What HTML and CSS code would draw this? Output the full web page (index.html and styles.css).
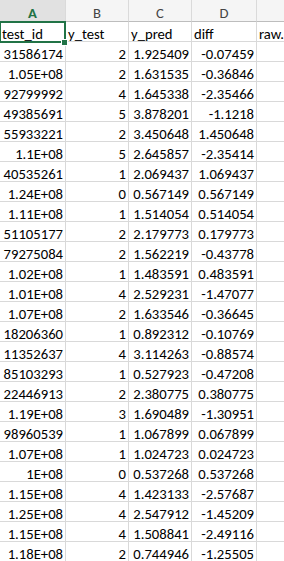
FILE: index.html
```html
<!DOCTYPE html>
<html>
<head>
<meta charset="utf-8">
<link rel="stylesheet" href="styles.css">
</head>
<body>
<div class="sheet">
  <div class="hd sel">A</div><div class="hd">B</div><div class="hd">C</div><div class="hd">D</div><div class="hd"></div>
  <div class="c t active">test_id<span class="selbox"></span><span class="handle"></span></div><div class="c t">y_test</div><div class="c t">y_pred</div><div class="c t">diff</div><div class="c t">raw.</div>
  <div class="c">31586174</div><div class="c">2</div><div class="c">1.925409</div><div class="c">-0.07459</div><div class="c"></div>
  <div class="c">1.05E+08</div><div class="c">2</div><div class="c">1.631535</div><div class="c">-0.36846</div><div class="c"></div>
  <div class="c">92799992</div><div class="c">4</div><div class="c">1.645338</div><div class="c">-2.35466</div><div class="c"></div>
  <div class="c">49385691</div><div class="c">5</div><div class="c">3.878201</div><div class="c">-1.1218</div><div class="c"></div>
  <div class="c">55933221</div><div class="c">2</div><div class="c">3.450648</div><div class="c">1.450648</div><div class="c"></div>
  <div class="c">1.1E+08</div><div class="c">5</div><div class="c">2.645857</div><div class="c">-2.35414</div><div class="c"></div>
  <div class="c">40535261</div><div class="c">1</div><div class="c">2.069437</div><div class="c">1.069437</div><div class="c"></div>
  <div class="c">1.24E+08</div><div class="c">0</div><div class="c">0.567149</div><div class="c">0.567149</div><div class="c"></div>
  <div class="c">1.11E+08</div><div class="c">1</div><div class="c">1.514054</div><div class="c">0.514054</div><div class="c"></div>
  <div class="c">51105177</div><div class="c">2</div><div class="c">2.179773</div><div class="c">0.179773</div><div class="c"></div>
  <div class="c">79275084</div><div class="c">2</div><div class="c">1.562219</div><div class="c">-0.43778</div><div class="c"></div>
  <div class="c">1.02E+08</div><div class="c">1</div><div class="c">1.483591</div><div class="c">0.483591</div><div class="c"></div>
  <div class="c">1.01E+08</div><div class="c">4</div><div class="c">2.529231</div><div class="c">-1.47077</div><div class="c"></div>
  <div class="c">1.07E+08</div><div class="c">2</div><div class="c">1.633546</div><div class="c">-0.36645</div><div class="c"></div>
  <div class="c">18206360</div><div class="c">1</div><div class="c">0.892312</div><div class="c">-0.10769</div><div class="c"></div>
  <div class="c">11352637</div><div class="c">4</div><div class="c">3.114263</div><div class="c">-0.88574</div><div class="c"></div>
  <div class="c">85103293</div><div class="c">1</div><div class="c">0.527923</div><div class="c">-0.47208</div><div class="c"></div>
  <div class="c">22446913</div><div class="c">2</div><div class="c">2.380775</div><div class="c">0.380775</div><div class="c"></div>
  <div class="c">1.19E+08</div><div class="c">3</div><div class="c">1.690489</div><div class="c">-1.30951</div><div class="c"></div>
  <div class="c">98960539</div><div class="c">1</div><div class="c">1.067899</div><div class="c">0.067899</div><div class="c"></div>
  <div class="c">1.07E+08</div><div class="c">1</div><div class="c">1.024723</div><div class="c">0.024723</div><div class="c"></div>
  <div class="c">1E+08</div><div class="c">0</div><div class="c">0.537268</div><div class="c">0.537268</div><div class="c"></div>
  <div class="c">1.15E+08</div><div class="c">4</div><div class="c">1.423133</div><div class="c">-2.57687</div><div class="c"></div>
  <div class="c">1.25E+08</div><div class="c">4</div><div class="c">2.547912</div><div class="c">-1.45209</div><div class="c"></div>
  <div class="c">1.15E+08</div><div class="c">4</div><div class="c">1.508841</div><div class="c">-2.49116</div><div class="c"></div>
  <div class="c">1.18E+08</div><div class="c">2</div><div class="c">0.744946</div><div class="c">-1.25505</div><div class="c"></div>
</div>
</body>
</html>
```
FILE: styles.css
```css
html, body {
  margin: 0;
  padding: 0;
  background: #ffffff;
}
body {
  font-family: Calibri, Carlito, "Liberation Sans", Arial, sans-serif;
  font-size: 14.67px;
  color: #000000;
  overflow: hidden;
}
.sheet {
  display: grid;
  grid-template-columns: 66px 63px 63px 65px 1fr;
  width: 284px;
}
.hd {
  box-sizing: border-box;
  height: 22px;
  padding-top: 5px;
  line-height: 16px;
  text-align: center;
  background: #f5f5f5;
  color: #444444;
  border-right: 1px solid #dadada;
  border-bottom: 1px solid #bdbdbd;
  white-space: nowrap;
  overflow: hidden;
}
.hd.sel {
  background: #e1e1e1;
  color: #217346;
  font-weight: bold;
  border-bottom-color: #217346;
}
.c {
  box-sizing: border-box;
  height: 20px;
  padding: 5px 2px 0 2px;
  line-height: 14px;
  text-align: right;
  border-right: 1px solid #d9d9d9;
  border-bottom: 1px solid #d9d9d9;
  white-space: nowrap;
  overflow: visible;
  position: relative;
}
.c.t {
  text-align: left;
}
.c:nth-child(5n) {
  border-right: none;
}
.active {
  z-index: 2;
}
.selbox {
  position: absolute;
  top: -1px;
  left: -1px;
  right: -1px;
  bottom: -2px;
  border: 2px solid #217346;
  pointer-events: none;
}
.handle {
  position: absolute;
  left: 62px;
  top: 18px;
  width: 5px;
  height: 5px;
  background: #217346;
  box-shadow: 0 0 0 1px #ffffff;
}
```
